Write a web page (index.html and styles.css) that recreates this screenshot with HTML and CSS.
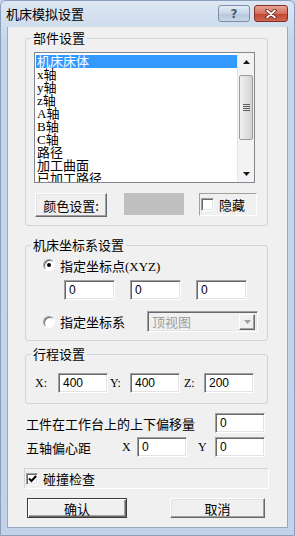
FILE: index.html
```html
<!DOCTYPE html>
<html lang="zh-CN">
<head>
    <meta charset="UTF-8">
    <meta name="viewport" content="width=device-width, initial-scale=1.0">
    <title>机床模拟设置</title>
    <link rel="stylesheet" href="styles.css">
</head>
<body>
    <div class="window">
        <!-- Barre de titre -->
        <div class="titlebar">
            <span class="title">机床模拟设置</span>
            <div class="title-btns">
                <div class="tbtn help">?</div>
                <div class="tbtn close">
                    <svg width="12" height="10" viewBox="0 0 12 10">
                        <path d="M2 1.5 L10 8.5 M10 1.5 L2 8.5" stroke="#5a1e14" stroke-width="3.4" stroke-linecap="round"/>
                        <path d="M2 1.5 L10 8.5 M10 1.5 L2 8.5" stroke="#ffffff" stroke-width="1.8" stroke-linecap="round"/>
                    </svg>
                </div>
            </div>
        </div>

        <div class="client">
            <!-- 部件设置 -->
            <fieldset class="group group-parts">
                <legend>部件设置</legend>
                <div class="listbox">
                    <div class="list-items">
                        <div class="item selected">机床床体</div>
                        <div class="item">x轴</div>
                        <div class="item">y轴</div>
                        <div class="item">z轴</div>
                        <div class="item">A轴</div>
                        <div class="item">B轴</div>
                        <div class="item">C轴</div>
                        <div class="item">路径</div>
                        <div class="item">加工曲面</div>
                        <div class="item">已加工路径</div>
                    </div>
                    <div class="scrollbar">
                        <div class="sb-btn">
                            <svg width="7" height="4" viewBox="0 0 7 4"><path d="M0 4 L3.5 0 L7 4 Z" fill="#1a1a1a"/></svg>
                        </div>
                        <div class="sb-track">
                            <div class="sb-thumb">
                                <div class="grip"></div>
                                <div class="grip"></div>
                                <div class="grip"></div>
                                <div class="grip"></div>
                            </div>
                        </div>
                        <div class="sb-btn">
                            <svg width="7" height="4" viewBox="0 0 7 4"><path d="M0 0 L7 0 L3.5 4 Z" fill="#1a1a1a"/></svg>
                        </div>
                    </div>
                </div>
                <div class="parts-row">
                    <div class="btn btn-color">颜色设置:</div>
                    <div class="swatch"></div>
                    <div class="hide-box">
                        <span class="check"></span>
                        <span>隐藏</span>
                    </div>
                </div>
            </fieldset>

            <!-- 机床坐标系设置 -->
            <fieldset class="group group-coord">
                <legend>机床坐标系设置</legend>
                <div class="radio-row">
                    <span class="radio on"><span class="dot"></span></span>
                    <span>指定坐标点(XYZ)</span>
                </div>
                <div class="xyz-row">
                    <div class="edit">0</div>
                    <div class="edit">0</div>
                    <div class="edit">0</div>
                </div>
                <div class="radio-row radio-row-2">
                    <span class="radio"></span>
                    <span class="radio-label">指定坐标系</span>
                    <div class="combo">
                        <span class="combo-text">顶视图</span>
                        <span class="combo-btn">
                            <svg width="7" height="4" viewBox="0 0 7 4"><path d="M0 0 L7 0 L3.5 4 Z" fill="#a0a0a0"/></svg>
                        </span>
                    </div>
                </div>
            </fieldset>

            <!-- 行程设置 -->
            <fieldset class="group group-travel">
                <legend>行程设置</legend>
                <div class="travel-row">
                    <span class="axis axis-x">X:</span>
                    <div class="edit edit-short">400</div>
                    <span class="axis axis-y">Y:</span>
                    <div class="edit edit-short">400</div>
                    <span class="axis axis-z">Z:</span>
                    <div class="edit edit-short">200</div>
                </div>
            </fieldset>

            <div class="offset-row">
                <span>工件在工作台上的上下偏移量</span>
                <div class="edit edit-short">0</div>
            </div>

            <div class="ecc-row">
                <span class="ecc-label">五轴偏心距</span>
                <span class="ecc-x">X</span>
                <div class="edit edit-short">0</div>
                <span class="ecc-y">Y</span>
                <div class="edit edit-short">0</div>
            </div>

            <div class="collision">
                <span class="check checked">
                    <svg width="9" height="8" viewBox="0 0 9 8"><path d="M1 3.5 L3.5 6 L8 1" fill="none" stroke="#000" stroke-width="2"/></svg>
                </span>
                <span>碰撞检查</span>
            </div>

            <div class="actions">
                <div class="btn btn-ok">确认</div>
                <div class="btn btn-cancel">取消</div>
            </div>
        </div>
    </div>
</body>
</html>
```

FILE: styles.css
```css
* {
    margin: 0;
    padding: 0;
    box-sizing: border-box;
}

body {
    font-family: "Liberation Serif", "Noto Sans CJK SC", sans-serif;
    font-size: 13px;
    color: #000;
    background: #c4d5ea;
}

.window {
    width: 295px;
    height: 536px;
    padding: 0 6px 8px 6px;
    background: linear-gradient(#dde7f3, #c6d6ea 40px, #c2d3e9);
    border: 1px solid #8a9fba;
    border-radius: 6px 6px 0 0;
}

.titlebar {
    height: 26px;
    display: flex;
    align-items: center;
    justify-content: space-between;
}

.title {
    font-family: "Noto Sans CJK SC", sans-serif;
    font-size: 13px;
    margin-top: -1px;
    margin-left: -1px;
}

.title-btns {
    display: flex;
    gap: 4px;
    align-self: flex-start;
    margin-top: 4px;
}

.tbtn {
    height: 17px;
    border-radius: 3px;
    display: flex;
    align-items: center;
    justify-content: center;
}

.help {
    width: 32px;
    border: 1px solid #7d8ea6;
    background: linear-gradient(#e3ebf5, #c7d5e6 50%, #b6c7dc 51%, #c7d6e8);
    color: #4d5c72;
    font-family: "DejaVu Sans", sans-serif;
    font-size: 12px;
    font-weight: bold;
}

.close {
    width: 34px;
    border: 1px solid #823025;
    background: linear-gradient(#e8a496, #d66e5c 50%, #c44430 51%, #d06650);
}

.client {
    height: 501px;
    background: #f0f0f0;
    border: 1px solid #97a9c2;
    border-top: none;
    padding: 3px 19px 0 17px;
}

/* Cadres de groupe */
.group {
    border: 1px solid #cdd5db;
    border-radius: 3px;
    padding: 0 8px 8px 8px;
    min-width: 0;
}

.group legend {
    font-family: "Noto Sans CJK SC", sans-serif;
    line-height: 16px;
    padding: 0 2px;
    margin-left: -3px;
}

.group-parts legend + * {
    margin-top: 6px;
}

/* Liste */
.listbox {
    width: 221px;
    height: 131px;
    border: 1px solid #828790;
    background: #fff;
    display: flex;
    overflow: hidden;
}

.list-items {
    flex: 1;
    padding: 2px 0 0 1px;
    overflow: hidden;
}

.item {
    height: 13px;
    line-height: 13px;
    padding-left: 1px;
    white-space: nowrap;
}

.item.selected {
    background: #3399ff;
    color: #fff;
}

.scrollbar {
    width: 17px;
    display: flex;
    flex-direction: column;
    background: #f3f3f3;
    border-left: 1px solid #e6e6e6;
}

.sb-btn {
    height: 17px;
    display: flex;
    align-items: center;
    justify-content: center;
}

.sb-track {
    flex: 1;
    padding-top: 5px;
}

.sb-thumb {
    height: 65px;
    margin: 0 1px;
    border: 1px solid #9c9c9c;
    border-radius: 2px;
    background: linear-gradient(90deg, #f2f2f2, #e0e0e0 55%, #d2d2d2);
    display: flex;
    flex-direction: column;
    align-items: center;
    justify-content: center;
    gap: 1px;
}

.grip {
    width: 7px;
    height: 1px;
    background: #5e5e5e;
}

/* Ligne couleur / masquer */
.parts-row {
    display: flex;
    align-items: flex-start;
    margin-top: 10px;
    padding-left: 1px;
}

.btn {
    font-family: "Noto Sans CJK SC", sans-serif;
    background: #f0f0f0;
    border: 1px solid;
    border-color: #fff #696969 #696969 #fff;
    box-shadow: inset -1px -1px 0 #a0a0a0, inset 1px 1px 0 #e3e3e3;
    display: flex;
    align-items: center;
    justify-content: center;
}

.btn-color {
    width: 72px;
    height: 24px;
}

.swatch {
    width: 60px;
    height: 22px;
    margin-left: 17px;
    background: #bfbfbf;
}

.hide-box {
    width: 58px;
    height: 23px;
    margin-left: 15px;
    border: 1px solid;
    border-color: #a0a0a0 #fff #fff #a0a0a0;
    display: flex;
    align-items: center;
    gap: 5px;
    padding-left: 1px;
    font-family: "Noto Sans CJK SC", sans-serif;
}

.check {
    width: 13px;
    height: 13px;
    background: #fff;
    border: 1px solid;
    border-color: #a0a0a0 #fff #fff #a0a0a0;
    box-shadow: inset 1px 1px 0 #696969, inset -1px -1px 0 #e3e3e3;
    display: flex;
    align-items: center;
    justify-content: center;
    flex-shrink: 0;
}

/* Coordonnees */
.group-coord {
    margin-top: 11px;
    padding-bottom: 8px;
}

.radio-row {
    display: flex;
    align-items: center;
    height: 16px;
    margin-top: 4px;
    padding-left: 9px;
    gap: 5px;
}

.radio-row-2 {
    height: 21px;
    margin-top: 11px;
}

.radio {
    width: 12px;
    height: 12px;
    border-radius: 50%;
    border: 1px solid;
    border-color: #a0a0a0 #fff #fff #a0a0a0;
    box-shadow: inset 1px 1px 0 #696969;
    background: #fff;
    display: flex;
    align-items: center;
    justify-content: center;
}

.dot {
    width: 4px;
    height: 4px;
    border-radius: 50%;
    background: #000;
}

.radio-label {
    width: 82px;
}

.xyz-row {
    display: flex;
    gap: 15px;
    margin-top: 7px;
    padding-left: 30px;
}

.edit {
    width: 51px;
    height: 20px;
    background: #fff;
    border: 1px solid;
    border-color: #a0a0a0 #fff #fff #a0a0a0;
    box-shadow: inset 1px 1px 0 #696969, inset -1px -1px 0 #e3e3e3;
    font-family: "Liberation Sans", sans-serif;
    font-size: 12px;
    line-height: 18px;
    padding-left: 4px;
}

.edit-short {
    width: 50px;
}

.combo {
    width: 111px;
    height: 21px;
    border: 1px solid;
    border-color: #a0a0a0 #fff #fff #a0a0a0;
    box-shadow: inset 1px 1px 0 #696969, inset -1px -1px 0 #e3e3e3;
    display: flex;
    align-items: center;
    justify-content: space-between;
    padding: 2px;
}

.combo-text {
    font-family: "Noto Sans CJK SC", sans-serif;
    color: #a0a0a0;
    padding-left: 2px;
}

.combo-btn {
    width: 16px;
    height: 16px;
    border: 1px solid;
    border-color: #fff #696969 #696969 #fff;
    box-shadow: inset -1px -1px 0 #a0a0a0;
    display: flex;
    align-items: center;
    justify-content: center;
}

/* Course */
.group-travel {
    margin-top: 5px;
    padding-bottom: 10px;
}

.travel-row {
    display: flex;
    align-items: center;
    margin-top: 11px;
}

.axis {
    font-size: 12px;
}

.axis-x {
    width: 24px;
    padding-left: 1px;
}

.axis-y {
    width: 22px;
    padding-left: 2px;
}

.axis-z {
    width: 24px;
    padding-left: 4px;
}

/* Decalage / excentricite */
.offset-row {
    display: flex;
    align-items: center;
    justify-content: space-between;
    margin-top: 9px;
    padding-left: 1px;
    padding-right: 3px;
}

.ecc-row {
    display: flex;
    align-items: center;
    margin-top: 4px;
    padding-left: 1px;
}

.ecc-label {
    width: 95px;
}

.ecc-x {
    width: 16px;
    padding-left: 1px;
    font-size: 12px;
}

.ecc-y {
    width: 28px;
    padding-left: 11px;
    font-size: 12px;
}

.collision {
    width: 245px;
    height: 21px;
    margin-top: 11px;
    margin-left: -1px;
    border: 1px solid #d5d5d5;
    border-right-color: #fff;
    border-bottom-color: #fff;
    display: flex;
    align-items: center;
    gap: 5px;
    padding-left: 1px;
}

.collision .check {
    width: 12px;
    height: 12px;
}

.actions {
    display: flex;
    justify-content: space-between;
    margin-top: 9px;
    padding-left: 2px;
    padding-right: 3px;
}

.btn-ok {
    width: 100px;
    height: 20px;
    border-color: #3c3c3c;
    box-shadow: inset 1px 1px 0 #fff, inset -1px -1px 0 #696969, inset -2px -2px 0 #a0a0a0;
}

.btn-cancel {
    width: 95px;
    height: 20px;
}
```
